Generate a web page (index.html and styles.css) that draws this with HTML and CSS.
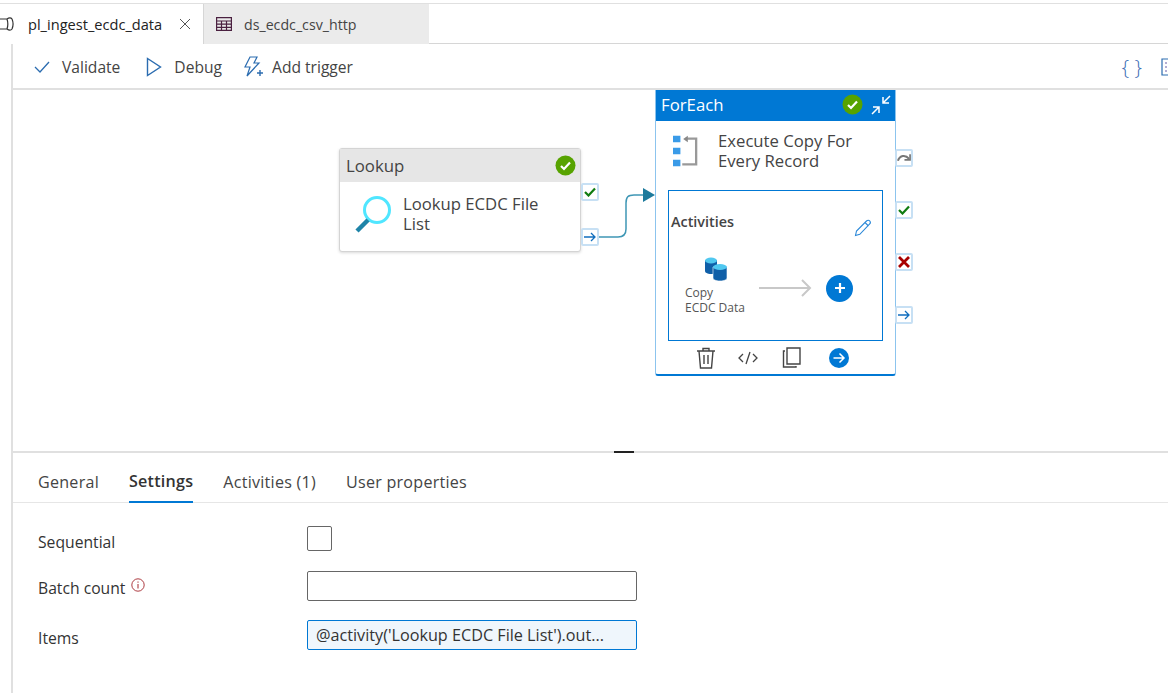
FILE: index.html
```html
<!DOCTYPE html>
<html lang="en">
<head>
    <meta charset="UTF-8">
    <meta name="viewport" content="width=device-width, initial-scale=1.0">
    <title>pl_ingest_ecdc_data</title>
    <link rel="stylesheet" href="styles.css">
</head>
<body>
    <nav class="doc-tabs">
        <div class="doc-tab doc-tab-active">
            <svg class="tab-icon-pipe" width="14" height="16" viewBox="0 0 14 16" fill="none" stroke="#333" stroke-width="1.2">
                <path d="M0 3h7c1 3 1 7 0 10H0M7 3c2-1.500 4-1.500 5 0 1.300 3 1.300 7 0 10-1 1.500-3 1.500-5 0"/>
            </svg>
            <span class="tab-name">pl_ingest_ecdc_data</span>
            <svg class="tab-close" width="12" height="12" viewBox="0 0 12 12" stroke="#555" stroke-width="1" fill="none">
                <path d="M1 1l10 10M11 1L1 11"/>
            </svg>
        </div>
        <div class="doc-tab doc-tab-off">
            <svg width="16" height="14" viewBox="0 0 16 14" fill="none" stroke="#4a2040" stroke-width="1.200">
                <path d="M.6.6h14.800v12.800H.6zM.6 4h14.800M.6 7.200h14.800M.6 10.400h14.800M5.500 4v9.400M10.500 4v9.400"/>
            </svg>
            <span class="tab-name">ds_ecdc_csv_http</span>
        </div>
    </nav>

    <main class="workspace">
        <div class="toolbar">
            <button class="tool-btn">
                <svg width="16" height="12" viewBox="0 0 16 12" fill="none" stroke="#2b6cb0" stroke-width="1.300"><path d="M1 6l5 5L15 1"/></svg>
                Validate
            </button>
            <button class="tool-btn tool-debug">
                <svg width="16" height="20" viewBox="0 0 16 20" fill="none" stroke="#2b6cb0" stroke-width="1.400"><path d="M1.500 1.500v17L14.500 10z"/></svg>
                Debug
            </button>
            <button class="tool-btn tool-trigger">
                <svg width="20" height="22" viewBox="0 0 20 22" fill="none" stroke="#2b6cb0" stroke-width="1.200"><path d="M7 1h7l-3 6h5L4 20l3-9H2z"/><path d="M14 17h6M17 14v6" stroke-width="1.400"/></svg>
                Add trigger
            </button>
            <div class="toolbar-right">
                <span class="braces">{ }</span>
                <svg class="props-icon" width="18" height="18" viewBox="0 0 18 18" fill="none" stroke="#2b6cb0" stroke-width="1.200"><path d="M1 1h16v16H1z"/><path d="M4 5h10M4 9h10M4 13h10" stroke="#6b5fa8" stroke-dasharray="2 1"/></svg>
            </div>
        </div>

        <section class="canvas">
            <svg class="link" width="80" height="60" viewBox="0 0 80 60" fill="none">
                <path d="M0 56h20c5 0 8-2 8-8V22c0-6 2-8 8-8h10" stroke="#3f97b5" stroke-width="1.500"/>
                <path d="M45 7l12 7-12 7z" fill="#1d7a9c"/>
            </svg>

            <div class="node node-lookup">
                <div class="node-head">
                    <span>Lookup</span>
                    <svg class="ok-badge" width="21" height="21" viewBox="0 0 21 21"><circle cx="10.500" cy="10.500" r="10" fill="#57a300"/><path d="M6 11l3 3 6-6.500" fill="none" stroke="#fff" stroke-width="2.200"/></svg>
                </div>
                <div class="node-body">
                    <svg class="node-icon" width="38" height="38" viewBox="0 0 38 38" fill="none">
                        <circle cx="22" cy="15" r="12.500" stroke="#50e6ff" stroke-width="3" fill="#fff"/>
                        <path d="M13 25L2 36" stroke="#1f84a8" stroke-width="4.500"/>
                    </svg>
                    <p class="node-title">Lookup ECDC File List</p>
                </div>
            </div>
            <button class="port port-lookup-ok"><svg width="12" height="10" viewBox="0 0 12 10" fill="none" stroke="#107c10" stroke-width="2.200"><path d="M1 5l3.500 3.500L11 1.500"/></svg></button>
            <button class="port port-lookup-next"><svg width="12" height="10" viewBox="0 0 12 10" fill="none" stroke="#106ebe" stroke-width="1.300"><path d="M0 5h11M7 1l4 4-4 4"/></svg></button>

            <div class="node node-foreach">
                <div class="node-head">
                    <span>ForEach</span>
                    <svg class="ok-badge" width="21" height="21" viewBox="0 0 21 21"><circle cx="10.500" cy="10.500" r="10" fill="#57a300"/><path d="M6 11l3 3 6-6.500" fill="none" stroke="#fff" stroke-width="2.200"/></svg>
                    <svg class="collapse" width="22" height="20" viewBox="0 0 22 20" fill="none" stroke="#fff" stroke-width="1.500"><path d="M2 19l7-7M3 12h6v6M20 1l-7 7M13 2v6h6"/></svg>
                </div>
                <div class="node-body foreach-body">
                    <svg class="node-icon" width="25" height="33" viewBox="0 0 27 34">
                        <path d="M0 0h8v7H0zM0 13h8v7H0zM0 26h8v7H0z" fill="#3a9be8"/>
                        <path d="M15 3h10v28H10" fill="none" stroke="#999" stroke-width="2.500"/>
                        <path d="M16 0l-5 3.500 5 3.500z" fill="#888"/>
                    </svg>
                    <p class="node-title">Execute Copy For Every Record</p>
                </div>
                <div class="inner-box">
                    <div class="inner-head">
                        <span>Activities</span>
                        <svg width="18" height="18" viewBox="0 0 18 18" fill="none" stroke="#2b88d8" stroke-width="1.100"><path d="M1.500 16.500l1-4.500L12.500 2c1-1 2.500-1 3.300 0 .8 1 .7 2.300-.3 3.200L5.800 15.300zM11 3.500l3.500 3.500"/></svg>
                    </div>
                    <div class="inner-flow">
                        <div class="copy-item">
                            <svg width="22" height="24" viewBox="0 0 22 24">
                                <path d="M0 3v11c0 1.600 2.500 3 6 3s6-1.400 6-3V3z" fill="#0f5fa8"/>
                                <ellipse cx="6" cy="3.500" rx="6" ry="3" fill="#50c8f0"/>
                                <path d="M8 10v11c0 1.600 2.800 3 7 3s7-1.400 7-3V10z" fill="#0f5fa8" stroke="#fff" stroke-width=".6"/>
                                <ellipse cx="15" cy="10" rx="7" ry="3" fill="#50c8f0"/>
                            </svg>
                            <span class="copy-name">Copy<br>ECDC Data</span>
                        </div>
                        <svg class="flow-arrow" width="53" height="20" viewBox="0 0 53 20" fill="none" stroke="#c8c8c8" stroke-width="2"><path d="M0 10h51M43 2l8 8-8 8"/></svg>
                        <button class="add-btn"><svg width="12" height="12" viewBox="0 0 12 12" stroke="#fff" stroke-width="2.200"><path d="M6 1v10M1 6h10"/></svg></button>
                    </div>
                </div>
                <div class="node-foot">
                    <svg width="20" height="22" viewBox="0 0 20 22" fill="none" stroke="#444" stroke-width="1.400"><path d="M1 4h18M7 4V1.500h6V4M3 4l1.500 17h11L17 4M8 8v9M12 8v9"/></svg>
                    <svg width="20" height="14" viewBox="0 0 20 14" fill="none" stroke="#444" stroke-width="1.300"><path d="M5 3L1 7l4 4M15 3l4 4-4 4M12 1L8 13"/></svg>
                    <svg class="foot-copy" width="19" height="21" viewBox="0 0 19 21" fill="none" stroke="#444" stroke-width="1.400"><path d="M5 1h13v16H5z"/><path d="M3 4H1.500v16H14v-1"/></svg>
                    <svg class="foot-go" width="20" height="20" viewBox="0 0 20 20"><circle cx="10" cy="10" r="10" fill="#0078d4"/><path d="M4.500 10h10M10.500 5.500l4.500 4.500-4.500 4.500" fill="none" stroke="#fff" stroke-width="1.500"/></svg>
                </div>
            </div>
            <button class="port port-skip"><svg width="15" height="10" viewBox="0 0 15 10" fill="none" stroke="#777" stroke-width="2.200"><path d="M1 8c2-6 8-7 12-2"/><path d="M14 1v6H8" stroke-width="1.800"/></svg></button>
            <button class="port port-ok"><svg width="12" height="10" viewBox="0 0 12 10" fill="none" stroke="#107c10" stroke-width="2.200"><path d="M1 5l3.500 3.500L11 1.500"/></svg></button>
            <button class="port port-fail"><svg width="12" height="12" viewBox="0 0 12 12" fill="none" stroke="#a80000" stroke-width="2.800"><path d="M1 1l10 10M11 1L1 11"/></svg></button>
            <button class="port port-next"><svg width="12" height="10" viewBox="0 0 12 10" fill="none" stroke="#106ebe" stroke-width="1.300"><path d="M0 5h11M7 1l4 4-4 4"/></svg></button>

            <span class="split-handle"></span>
        </section>

        <section class="panel">
            <div class="panel-tabs">
                <a>General</a>
                <a class="selected">Settings</a>
                <a>Activities (1)</a>
                <a>User properties</a>
            </div>
            <div class="form">
                <label class="form-label form-label-first">Sequential</label>
                <span class="checkbox"></span>
                <label class="form-label">Batch count
                    <svg class="info" width="14" height="14" viewBox="0 0 14 14" fill="none" stroke="#a4262c"><circle cx="7" cy="7" r="6.200" stroke-width=".9"/><path d="M7 6v4.500M7 3.500v1.200" stroke-width="1"/></svg>
                </label>
                <input class="text-input" type="text">
                <label class="form-label">Items</label>
                <input class="text-input text-input-filled" type="text" value="@activity('Lookup ECDC File List').out...">
            </div>
        </section>
    </main>
</body>
</html>
```

FILE: styles.css
```css
* {
    box-sizing: border-box;
}

html, body {
    height: 693px;
    margin: 0;
    overflow: hidden;
}

body {
    padding-top: 3px;
    background: #fff;
    color: #333;
    font-family: "Open Sans", "Noto Sans", "Liberation Sans", sans-serif;
    font-size: 15.600px;
}

button {
    border: 0;
    background: none;
    padding: 0;
    font: inherit;
    color: inherit;
}

p {
    margin: 0;
}

/* top tabs */
.doc-tabs {
    display: flex;
    height: 41px;
    border-top: 1px solid #e0e0e0;
    border-bottom: 1px solid #d6d6d6;
}

.doc-tab {
    display: flex;
    align-items: center;
    height: 40px;
    font-size: 14.600px;
}

.doc-tab-active {
    width: 204px;
    background: #fff;
    border-right: 1px solid #d6d6d6;
    color: #222;
}

.tab-icon-pipe {
    flex: none;
    margin-right: 14px;
}

.tab-close {
    margin-left: auto;
    margin-right: 12px;
}

.doc-tab-off {
    width: 225px;
    background: #ebebeb;
    padding-left: 12px;
    gap: 12px;
    color: #444;
    font-size: 14.200px;
}

/* work area */
.workspace {
    margin-left: 11px;
    height: 649px;
    border-left: 2px solid #e0e0e0;
    display: flex;
    flex-direction: column;
}

.toolbar {
    display: flex;
    align-items: center;
    flex: none;
    height: 46px;
    padding: 2px 0 0 21px;
    border-bottom: 2px solid #e0e0e0;
    white-space: nowrap;
    overflow: hidden;
}

.tool-btn {
    display: flex;
    align-items: center;
    gap: 12px;
    color: #444;
}

.tool-debug {
    margin-left: 26px;
}

.tool-trigger {
    margin-left: 21px;
    gap: 9px;
}

.toolbar-right {
    margin-left: auto;
    display: flex;
    align-items: center;
    gap: 19px;
    margin-right: -11px;
}

.braces {
    color: #3f6fb5;
    font-size: 21px;
    font-weight: 300;
}

/* pipeline canvas: nodes sit on free coordinates */
.canvas {
    position: relative;
    flex: none;
    height: 363px;
    border-bottom: 2px solid #e0e0e0;
}

.link {
    position: absolute;
    left: 585px;
    top: 91px;
}

.node {
    position: absolute;
    background: #fff;
    font-size: 16.800px;
}

.node-head {
    display: flex;
    align-items: center;
}

.node-lookup {
    left: 326px;
    top: 58px;
    width: 242px;
    height: 104px;
    border: 1px solid #d4d4d4;
    border-radius: 3px;
    box-shadow: 0 1px 3px rgba(0, 0, 0, 0.15);
}

.node-lookup .node-head {
    height: 33px;
    padding: 0 4px 0 6px;
    background: #e6e6e6;
    color: #444;
}

.ok-badge {
    margin-left: auto;
}

.node-body {
    display: flex;
    align-items: center;
}

.node-lookup .node-body {
    padding: 12px 0 0 15px;
    gap: 10px;
}

.node-title {
    line-height: 20px;
    color: #444;
    font-size: 16.700px;
}

.node-lookup .node-title {
    width: 165px;
}

.node-foreach {
    left: 642px;
    top: 0;
    width: 241px;
    height: 286px;
    border: 1px solid #8cc4ee;
    border-bottom: 2px solid #0078d4;
    border-top: 0;
    border-radius: 0 0 3px 3px;
    display: flex;
    flex-direction: column;
}

.node-foreach .node-head {
    height: 31px;
    padding: 0 3px 2px 5px;
    background: #0078d4;
    color: #fff;
}

.collapse {
    margin-left: 7px;
}

.foreach-body {
    height: 69px;
    padding: 0 0 9px 17px;
    gap: 20px;
}

.foreach-body .node-title {
    width: 155px;
}

.inner-box {
    margin-left: 12px;
    width: 215px;
    height: 151px;
    border: 1.500px solid #0078d4;
    padding: 21px 10px 0 2px;
}

.inner-head {
    display: flex;
    justify-content: space-between;
    font-size: 14.400px;
    font-weight: 600;
    color: #444;
}

.inner-head svg {
    margin-top: 7px;
}

.inner-flow {
    display: flex;
    align-items: center;
    margin-top: 20px;
}

.copy-item {
    display: flex;
    flex-direction: column;
    align-items: center;
    width: 82px;
    margin-left: 3px;
    padding-left: 3px;
    padding-right: 2px;
}

.copy-name {
    align-self: flex-start;
    margin: 4px 0 0 8px;
    font-size: 12px;
    line-height: 15px;
    color: #555;
    white-space: nowrap;
}

.flow-arrow {
    margin: 4px 0 0 3px;
}

.add-btn {
    display: flex;
    align-items: center;
    justify-content: center;
    width: 27px;
    height: 27px;
    margin: 4px 0 0 14px;
    border-radius: 50%;
    background: #0078d4;
}

.node-foot {
    display: flex;
    align-items: center;
    flex: 1;
    padding-left: 40px;
    gap: 22px;
}

.foot-copy {
    margin-left: 2px;
}

.foot-go {
    margin-left: 6px;
}

.port {
    position: absolute;
    display: flex;
    align-items: center;
    justify-content: center;
    width: 18px;
    height: 18px;
    background: #fff;
    border: 2px solid #c7e0f4;
    border-radius: 2px;
}

.port-lookup-ok { left: 568px; top: 93px; }
.port-lookup-next { left: 568px; top: 138px; }
.port-skip { left: 882px; top: 59px; }
.port-ok { left: 882px; top: 111px; }
.port-fail { left: 882px; top: 163px; }
.port-next { left: 882px; top: 216px; }

.split-handle {
    position: absolute;
    left: 601px;
    bottom: -2px;
    width: 20px;
    height: 2px;
    background: #222;
}

/* settings panel */
.panel-tabs {
    display: flex;
    gap: 30px;
    height: 50px;
    padding-left: 25px;
    border-bottom: 1px solid #e6e6e6;
    font-size: 16.100px;
    letter-spacing: 0.25px;
    color: #444;
}

.panel-tabs a {
    display: flex;
    align-items: center;
    height: 50px;
    padding-top: 8px;
}

.panel-tabs .selected {
    font-weight: 600;
    color: #333;
    border-bottom: 2px solid #0078d4;
}

.form {
    display: grid;
    grid-template-columns: 269px 330px;
    grid-template-rows: 25px 30px 30px;
    row-gap: 20px;
    align-items: center;
    padding: 23px 0 0 25px;
}

.form-label {
    display: flex;
    align-items: center;
    gap: 6px;
    font-size: 15.700px;
    font-weight: 500;
    color: #333;
    padding-top: 3px;
}

.form-label-first {
    padding-top: 7px;
}

.info {
    margin-bottom: 5px;
}

.checkbox {
    width: 25px;
    height: 25px;
    border: 1px solid #666;
    border-radius: 2px;
}

.text-input {
    width: 330px;
    height: 30px;
    padding: 0 8px;
    border: 1px solid #666;
    border-radius: 2px;
    background: #fff;
    font: inherit;
    font-size: 16.200px;
    font-weight: 500;
    color: #333;
}

.text-input-filled {
    margin-bottom: 2px;
    border-color: #0078d4;
    background: #eff6fc;
}
```
